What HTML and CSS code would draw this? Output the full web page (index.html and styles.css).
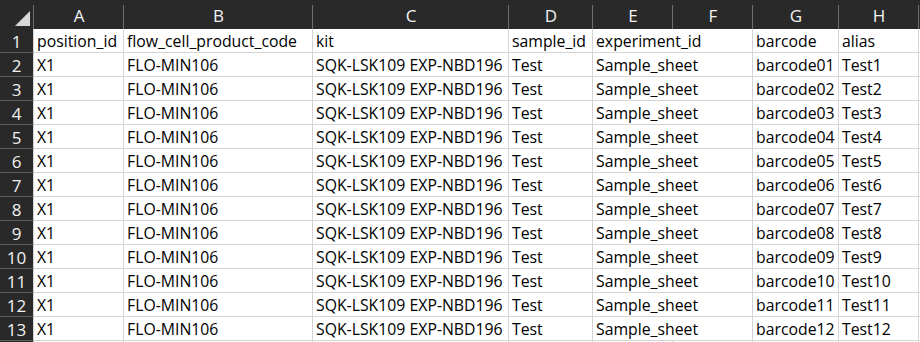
FILE: index.html
```html
<!DOCTYPE html>
<html>
<head>
<meta charset="utf-8">
<link rel="stylesheet" href="styles.css">
</head>
<body>
<div class="sheet">
  <div class="corner"><div class="tri"></div></div>
  <div class="col">A</div>
  <div class="col">B</div>
  <div class="col">C</div>
  <div class="col">D</div>
  <div class="col">E</div>
  <div class="col">F</div>
  <div class="col">G</div>
  <div class="col">H</div>
  <div class="col last"></div>

  <div class="rh">1</div><div class="c">position_id</div><div class="c">flow_cell_product_code</div><div class="c">kit</div><div class="c">sample_id</div><div class="c span">experiment_id</div><div class="c">barcode</div><div class="c">alias</div><div class="c"></div>
  <div class="rh">2</div><div class="c">X1</div><div class="c">FLO-MIN106</div><div class="c">SQK-LSK109 EXP-NBD196</div><div class="c">Test</div><div class="c span">Sample_sheet</div><div class="c">barcode01</div><div class="c">Test1</div><div class="c"></div>
  <div class="rh">3</div><div class="c">X1</div><div class="c">FLO-MIN106</div><div class="c">SQK-LSK109 EXP-NBD196</div><div class="c">Test</div><div class="c span">Sample_sheet</div><div class="c">barcode02</div><div class="c">Test2</div><div class="c"></div>
  <div class="rh">4</div><div class="c">X1</div><div class="c">FLO-MIN106</div><div class="c">SQK-LSK109 EXP-NBD196</div><div class="c">Test</div><div class="c span">Sample_sheet</div><div class="c">barcode03</div><div class="c">Test3</div><div class="c"></div>
  <div class="rh">5</div><div class="c">X1</div><div class="c">FLO-MIN106</div><div class="c">SQK-LSK109 EXP-NBD196</div><div class="c">Test</div><div class="c span">Sample_sheet</div><div class="c">barcode04</div><div class="c">Test4</div><div class="c"></div>
  <div class="rh">6</div><div class="c">X1</div><div class="c">FLO-MIN106</div><div class="c">SQK-LSK109 EXP-NBD196</div><div class="c">Test</div><div class="c span">Sample_sheet</div><div class="c">barcode05</div><div class="c">Test5</div><div class="c"></div>
  <div class="rh">7</div><div class="c">X1</div><div class="c">FLO-MIN106</div><div class="c">SQK-LSK109 EXP-NBD196</div><div class="c">Test</div><div class="c span">Sample_sheet</div><div class="c">barcode06</div><div class="c">Test6</div><div class="c"></div>
  <div class="rh">8</div><div class="c">X1</div><div class="c">FLO-MIN106</div><div class="c">SQK-LSK109 EXP-NBD196</div><div class="c">Test</div><div class="c span">Sample_sheet</div><div class="c">barcode07</div><div class="c">Test7</div><div class="c"></div>
  <div class="rh">9</div><div class="c">X1</div><div class="c">FLO-MIN106</div><div class="c">SQK-LSK109 EXP-NBD196</div><div class="c">Test</div><div class="c span">Sample_sheet</div><div class="c">barcode08</div><div class="c">Test8</div><div class="c"></div>
  <div class="rh">10</div><div class="c">X1</div><div class="c">FLO-MIN106</div><div class="c">SQK-LSK109 EXP-NBD196</div><div class="c">Test</div><div class="c span">Sample_sheet</div><div class="c">barcode09</div><div class="c">Test9</div><div class="c"></div>
  <div class="rh">11</div><div class="c">X1</div><div class="c">FLO-MIN106</div><div class="c">SQK-LSK109 EXP-NBD196</div><div class="c">Test</div><div class="c span">Sample_sheet</div><div class="c">barcode10</div><div class="c">Test10</div><div class="c"></div>
  <div class="rh">12</div><div class="c">X1</div><div class="c">FLO-MIN106</div><div class="c">SQK-LSK109 EXP-NBD196</div><div class="c">Test</div><div class="c span">Sample_sheet</div><div class="c">barcode11</div><div class="c">Test11</div><div class="c"></div>
  <div class="rh">13</div><div class="c">X1</div><div class="c">FLO-MIN106</div><div class="c">SQK-LSK109 EXP-NBD196</div><div class="c">Test</div><div class="c span">Sample_sheet</div><div class="c">barcode12</div><div class="c">Test12</div><div class="c"></div>
  <div class="rh"></div><div class="c"></div><div class="c"></div><div class="c"></div><div class="c"></div><div class="c"></div><div class="c"></div><div class="c"></div><div class="c"></div><div class="c"></div>
</div>
</body>
</html>
```
FILE: styles.css
```css
html, body {
  margin: 0;
  padding: 0;
  background: #ffffff;
  overflow: hidden;
}
.sheet {
  display: grid;
  grid-template-columns: 34px 90px 189px 196px 84px 80px 80px 86px 80px 40px;
  grid-template-rows: 29px repeat(14, 24px);
  font-family: "Open Sans", "Noto Sans", sans-serif;
  font-size: 15.8px;
  width: 960px;
  height: 342px;
  overflow: hidden;
}
.corner {
  background: #292929 linear-gradient(#6e6e6e, #6e6e6e) right 0 top 5px / 1px 100% no-repeat;
  position: relative;
}
.tri {
  position: absolute;
  right: 4px;
  bottom: 3px;
  width: 0;
  height: 0;
  border-left: 15px solid transparent;
  border-bottom: 15px solid #d8d8d8;
}
.col {
  background: #292929 linear-gradient(#6e6e6e, #6e6e6e) right 0 top 5px / 1px 100% no-repeat;
  color: #f2f2f2;
  font-size: 17px;
  display: flex;
  align-items: center;
  justify-content: center;
  padding-top: 2px;
}
.col.last {
  background: #292929;
}
.rh {
  background: #292929;
  color: #f2f2f2;
  font-size: 17px;
  display: flex;
  align-items: center;
  justify-content: center;
  border-bottom: 1px solid #5e5e5e;
  border-right: 1px solid #d4d4d4;
  padding-top: 1px;
}
.c {
  border-right: 1px solid #d4d4d4;
  border-bottom: 1px solid #d4d4d4;
  color: #000;
  padding: 1px 0 0 3px;
  display: flex;
  align-items: center;
  white-space: nowrap;
  overflow: hidden;
}
.span {
  grid-column: span 2;
}
```
